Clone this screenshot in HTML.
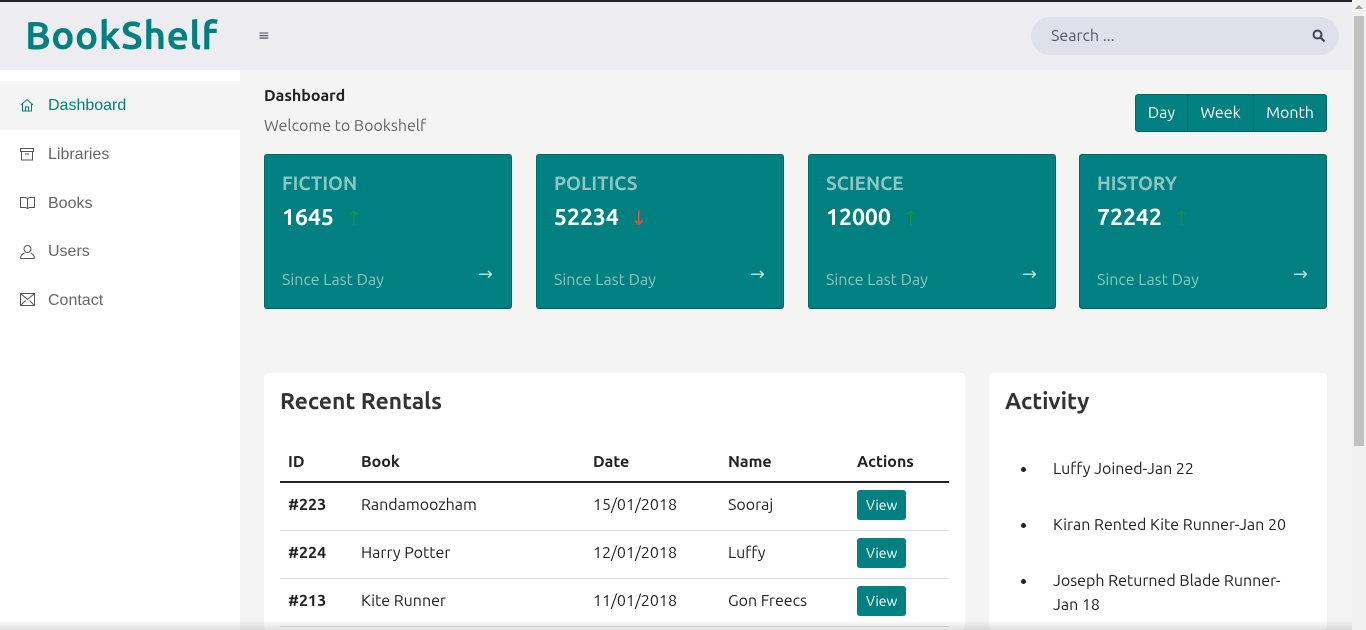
<!DOCTYPE html>
<html><head><style>
*{box-sizing:border-box;margin:0;padding:0}
html,body{width:1366px;height:630px;overflow:hidden}
body{background:#f4f4f5;font-family:"Ubuntu","DejaVu Sans","Liberation Sans",sans-serif;position:relative;color:#222}
.a{position:absolute}
.top{left:0;top:0;width:1352px;height:2px;background:#222}
.hdr{left:0;top:2px;width:1352px;height:68px;background:#ececf1}
.logo{left:25px;top:14px;font-size:39px;font-weight:bold;color:#008080;letter-spacing:0.3px}
.side{left:0;top:70px;width:240px;height:560px;background:#fff}
.nav{position:absolute;left:0;width:240px;height:49px;font-family:"Liberation Sans",sans-serif;font-size:16px;color:#666;padding-left:48px;line-height:49px}
.nav svg{position:absolute;left:20px;top:17px}
.search{left:1031px;top:17px;width:308px;height:38px;border-radius:19px;background:#e0e0ea;color:#556;font-size:16px;line-height:38px;padding-left:20px}
.sb{left:1352px;top:0;width:14px;height:630px;background:#f1f1f1}
.card{top:154px;width:248px;height:155px;background:#008080;border-radius:3px;border:1px solid #066}
.card .t{position:absolute;left:17px;top:17px;font-size:19px;color:#8cc6c4;font-weight:bold}
.card .n{position:absolute;left:17px;top:50px;font-size:23px;color:#fff;font-weight:bold}
.card .s{position:absolute;left:17px;top:116px;font-size:16px;color:#8cc6c4}
.card .ar{position:absolute;right:18px;top:109px;color:#b5dbda;font-size:18px}
.up{color:#1d8a4e;font-weight:normal;font-size:20px;margin-left:6px}
.panel{background:#fff;border-radius:4px;top:373px;height:257px}
h2{font-size:23px;font-weight:bold;color:#333}
table{border-collapse:collapse;position:absolute;left:16px;top:442px;width:669px;font-size:16px}
th{text-align:left;padding:0 8px;height:40px;border-bottom:2px solid #222;vertical-align:middle}
td{padding:0 8px 3px;height:48px;border-bottom:1px solid #ddd}
.v{background:#008080;color:#fff;font-size:14px;padding:7px 9px;border-radius:3px;display:inline-block}
li{margin-bottom:32px;font-size:16px;line-height:24px;list-style:none;position:relative}
li:before{content:"";position:absolute;left:-32px;top:10px;width:5px;height:5px;border-radius:50%;background:#222}
.shade{left:0;top:620px;width:1352px;height:10px;background:linear-gradient(rgba(0,0,0,0),rgba(0,0,0,0.12))}
</style></head><body>
<div class="a hdr"></div><div class="a top"></div>
<div class="a logo">BookShelf</div>
<div class="a" style="left:258px;top:27px;color:#556;font-size:14px">&#8801;</div>
<div class="a search">Search ...<svg style="position:absolute;right:13px;top:12px" width="14" height="14" viewBox="0 0 14 14"><circle cx="5.5" cy="5.5" r="4" fill="none" stroke="#445" stroke-width="2"/><path d="M8.5 8.5L12.5 12.5" stroke="#445" stroke-width="2.2"/></svg></div>
<div class="a side">
<div class="nav" style="top:11px;background:#f4f4f5;color:#008080"><svg width="14" height="14" viewBox="0 0 14 14" fill="none" stroke="#008080"><path d="M1 7L7 1.5 13 7M2.5 6v7h9V6M5.5 13V9h3v4"/></svg>Dashboard</div>
<div class="nav" style="top:60px"><svg width="14" height="14" viewBox="0 0 14 14" fill="none" stroke="#555"><path d="M0.5 1.5h13v3h-13zM1.5 4.5v8.5h11V4.5M5 7h4"/></svg>Libraries</div>
<div class="nav" style="top:109px"><svg width="15" height="14" viewBox="0 0 15 14" fill="none" stroke="#555"><path d="M0.5 1.5h5l2 1 2-1h5v10h-5l-2 1-2-1h-5zM7.5 2.5v10"/></svg>Books</div>
<div class="nav" style="top:157px"><svg width="15" height="15" viewBox="0 0 15 15" fill="none" stroke="#555"><circle cx="7.5" cy="5" r="3.5"/><path d="M0.5 14.5c0-4 3-5 4-5.5M14.5 14.5c0-4-3-5-4-5.5M0.5 14.5h14"/></svg>Users</div>
<div class="nav" style="top:206px"><svg width="15" height="13" viewBox="0 0 15 13" fill="none" stroke="#555"><path d="M0.5 0.5h14v12h-14zM0.5 0.5l7 6 7-6M0.5 12.5l5-5M14.5 12.5l-5-5"/></svg>Contact</div>
</div>
<div class="a" style="left:264px;top:87px;font-size:16px;font-weight:bold;color:#222">Dashboard</div>
<div class="a" style="left:264px;top:117px;font-size:16px;color:#666">Welcome to Bookshelf</div>
<div class="a" style="left:1135px;top:94px;width:192px;height:38px;background:#008080;border:1px solid #066;border-radius:3px;color:#fff;font-size:16px;display:flex">
<div style="width:52px;text-align:center;line-height:36px;border-right:1px solid #066">Day</div>
<div style="width:66px;text-align:center;line-height:36px;border-right:1px solid #066">Week</div>
<div style="flex:1;text-align:center;line-height:36px">Month</div></div>
<div class="a card" style="left:264px"><div class="t">FICTION</div><div class="n">1645 <span class="up">&#8593;</span></div><div class="s">Since Last Day</div><div class="ar">&#8594;</div></div>
<div class="a card" style="left:536px"><div class="t">POLITICS</div><div class="n">52234 <span class="up" style="color:#e74c3c">&#8595;</span></div><div class="s">Since Last Day</div><div class="ar">&#8594;</div></div>
<div class="a card" style="left:808px"><div class="t">SCIENCE</div><div class="n">12000 <span class="up">&#8593;</span></div><div class="s">Since Last Day</div><div class="ar">&#8594;</div></div>
<div class="a card" style="left:1079px"><div class="t">HISTORY</div><div class="n">72242 <span class="up">&#8593;</span></div><div class="s">Since Last Day</div><div class="ar">&#8594;</div></div>
<div class="a panel" style="left:264px;width:701px"><h2 style="position:absolute;left:16px;top:16px">Recent Rentals</h2></div>
<table style="left:280px"><tr><th style="width:73px">ID</th><th style="width:232px">Book</th><th style="width:135px">Date</th><th style="width:129px">Name</th><th>Actions</th></tr>
<tr><td><b>#223</b></td><td>Randamoozham</td><td>15/01/2018</td><td>Sooraj</td><td><span class="v">View</span></td></tr>
<tr><td><b>#224</b></td><td>Harry Potter</td><td>12/01/2018</td><td>Luffy</td><td><span class="v">View</span></td></tr>
<tr><td><b>#213</b></td><td>Kite Runner</td><td>11/01/2018</td><td>Gon Freecs</td><td><span class="v">View</span></td></tr></table>
<div class="a panel" style="left:989px;width:338px"><h2 style="position:absolute;left:16px;top:16px">Activity</h2>
<ul style="position:absolute;left:64px;top:84px;width:250px"><li>Luffy Joined-Jan 22</li><li>Kiran Rented Kite Runner-Jan 20</li><li>Joseph Returned Blade Runner-Jan 18</li></ul></div>
<div class="a shade"></div>
<div class="a sb"><div style="position:absolute;left:2px;top:16px;width:10px;height:430px;background:#c1c1c1"></div><div style="position:absolute;left:3px;top:5px;width:0;height:0;border:4px solid transparent;border-bottom-color:#999;border-top:0"></div></div>
</body></html>
